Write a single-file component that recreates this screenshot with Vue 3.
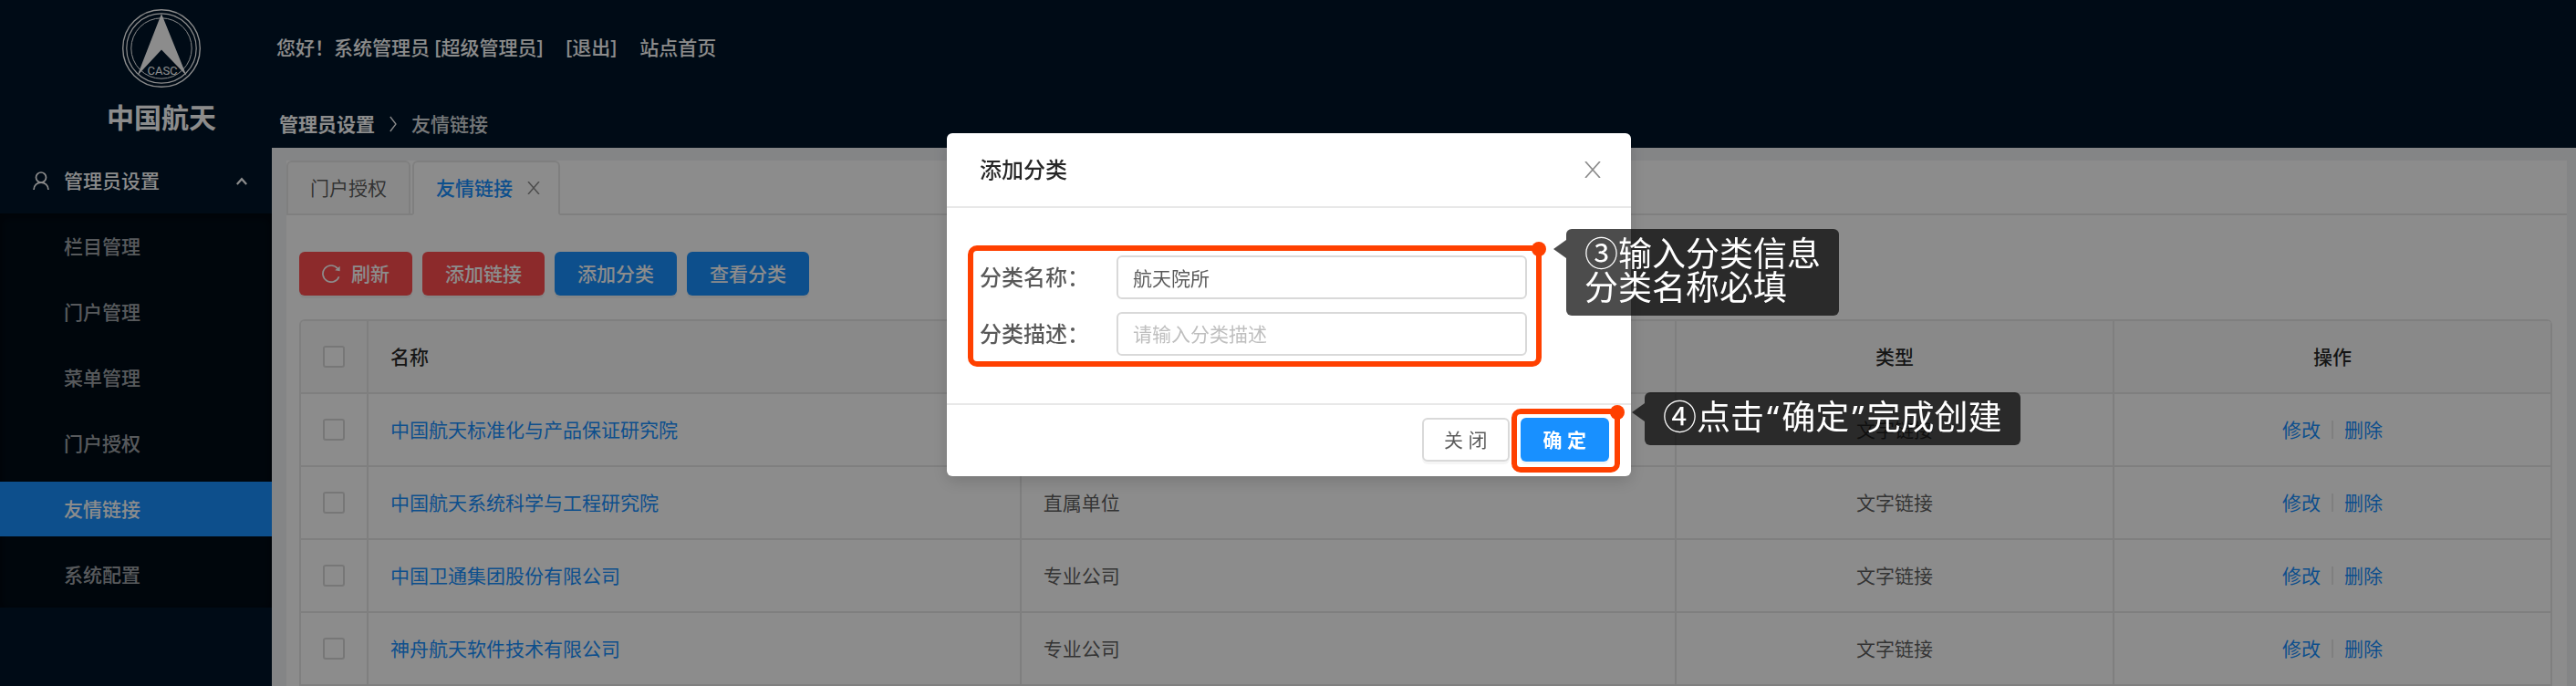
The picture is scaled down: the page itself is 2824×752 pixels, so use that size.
<script setup>
import { ref } from 'vue'

const menu = ['栏目管理', '门户管理', '菜单管理', '门户授权', '友情链接', '系统配置']
const activeMenu = ref('友情链接')
const rows = ref([
  { name: '中国航天标准化与产品保证研究院', category: '', type: '文字链接', checked: false },
  { name: '中国航天系统科学与工程研究院', category: '直属单位', type: '文字链接', checked: false },
  { name: '中国卫通集团股份有限公司', category: '专业公司', type: '文字链接', checked: false },
  { name: '神舟航天软件技术有限公司', category: '专业公司', type: '文字链接', checked: false }
])
const categoryName = ref('航天院所')
const categoryDesc = ref('')
</script>

<template>
  <div class="layout">
    <aside class="sidebar">
      <div class="brand">
        <svg class="logo" viewBox="0 0 86 86" aria-hidden="true">
          <g fill="none" stroke="#fff">
            <circle cx="43" cy="43" r="42.3" stroke-width="1.4" />
            <circle cx="43" cy="43" r="38.2" stroke-width="1.2" />
            <circle cx="43" cy="43" r="33.2" stroke-width="1" />
          </g>
          <path d="M43 5 L70.5 73 L43 44.5 L16.500 73 Z" fill="#fff" />
          <text class="logo-text" x="44" y="71.500" text-anchor="middle">CASC</text>
        </svg>
        <div class="brand-name">中国航天</div>
      </div>
      <button class="menu-title" type="button" aria-expanded="true">
        <svg class="user-icon" viewBox="0 0 18 20" fill="none" stroke="currentColor" stroke-width="1.700">
          <circle cx="9" cy="6.500" r="5.500" />
          <path d="M1 20 C1 9.500 17 9.500 17 20" />
        </svg>
        <span>管理员设置</span>
        <svg class="chevron" viewBox="0 0 12 9" fill="none" stroke="currentColor" stroke-width="2.200">
          <path d="M0.800 8 L6 2.200 L11.200 8" />
        </svg>
      </button>
      <nav class="submenu">
        <a
          v-for="item in menu"
          :key="item"
          href="#"
          :class="{ active: item === activeMenu }"
          @click.prevent="activeMenu = item"
        >{{ item }}</a>
      </nav>
    </aside>

    <div class="main">
      <header class="header">
        <div class="greeting">
          <span>您好！系统管理员 [超级管理员]</span>
          <a href="#">[退出]</a>
          <a href="#">站点首页</a>
        </div>
        <div class="breadcrumb">
          <strong>管理员设置</strong>
          <svg class="crumb-arrow" viewBox="0 0 8 18" fill="none" stroke="currentColor" stroke-width="1.300">
            <path d="M0.800 1 L7 9 L0.800 17" />
          </svg>
          <span>友情链接</span>
        </div>
      </header>

      <main class="content">
        <section class="panel">
          <div class="tabs">
            <button class="tab" type="button">门户授权</button>
            <button class="tab current" type="button">
              友情链接
              <svg class="tab-close" viewBox="0 0 14 14" stroke="currentColor" stroke-width="1.500">
                <path d="M1 0 L13 14 M13 0 L1 14" />
              </svg>
            </button>
          </div>

          <div class="body">
            <div class="toolbar">
              <button class="btn danger" type="button">
                <svg class="reload" viewBox="0 0 20 20" fill="none" stroke="currentColor" stroke-width="1.700">
                  <path d="M18.600 13.200 A9.100 9.100 0 1 1 17 4.200" />
                  <path d="M19.600 1.800 L19.600 7.200 L14.200 6.200 Z" fill="currentColor" stroke="none" />
                </svg>
                刷新
              </button>
              <button class="btn danger" type="button">添加链接</button>
              <button class="btn primary" type="button">添加分类</button>
              <button class="btn primary" type="button">查看分类</button>
            </div>

            <div class="table-box">
              <table>
                <colgroup>
                  <col class="c-check" />
                  <col class="c-name" />
                  <col class="c-cat" />
                  <col />
                  <col />
                </colgroup>
                <thead>
                  <tr>
                    <th class="center"><input type="checkbox" aria-label="全选" /></th>
                    <th>名称</th>
                    <th></th>
                    <th class="center">类型</th>
                    <th class="center">操作</th>
                  </tr>
                </thead>
                <tbody>
                  <tr v-for="row in rows" :key="row.name">
                    <td class="center"><input v-model="row.checked" type="checkbox" :aria-label="row.name" /></td>
                    <td><a href="#">{{ row.name }}</a></td>
                    <td>{{ row.category }}</td>
                    <td class="center">{{ row.type }}</td>
                    <td>
                      <div class="actions">
                        <a href="#">修改</a><i class="divider"></i><a href="#">删除</a>
                      </div>
                    </td>
                  </tr>
                </tbody>
              </table>
            </div>
          </div>
        </section>
      </main>
    </div>

    <div class="mask">
      <div class="modal" role="dialog" aria-labelledby="modal-title">
        <div class="modal-head">
          <h2 id="modal-title">添加分类</h2>
          <button class="modal-close" type="button" aria-label="关闭">
            <svg viewBox="0 0 18 18" stroke="currentColor" stroke-width="1.700">
              <path d="M1 0 L17 18 M17 0 L1 18" />
            </svg>
          </button>
        </div>
        <form class="modal-body" @submit.prevent>
          <div class="field">
            <label for="cat-name">分类名称：</label>
            <input id="cat-name" v-model="categoryName" type="text" />
          </div>
          <div class="field">
            <label for="cat-desc">分类描述：</label>
            <input id="cat-desc" v-model="categoryDesc" type="text" placeholder="请输入分类描述" />
          </div>
          <div class="mark mark-form">
            <i class="dot"></i>
            <div class="callout">③输入分类信息<br />分类名称必填</div>
          </div>
        </form>
        <div class="modal-foot">
          <button class="btn plain" type="button">关 闭</button>
          <div class="confirm">
            <button class="btn primary strong" type="button">确 定</button>
            <div class="mark mark-ok">
              <i class="dot"></i>
              <div class="callout">④点击<span class="quoted">“<b>确定</b>”</span>完成创建</div>
            </div>
          </div>
        </div>
      </div>
    </div>
  </div>
</template>

<style>
body {
  margin: 0;
  background: #f0f2f5;
}
</style>

<style scoped>
.layout,
.layout * {
  box-sizing: border-box;
}
.layout {
  display: flex;
  min-height: 100vh;
  font-family: "Noto Sans", "Noto Sans CJK SC", sans-serif;
  font-size: 21px;
  line-height: 32px;
  color: rgba(0, 0, 0, 0.65);
}
a {
  color: #1890ff;
  text-decoration: none;
}
button,
input {
  font: inherit;
  color: inherit;
}
button {
  border: 0;
  padding: 0;
  background: none;
  cursor: pointer;
}

.sidebar {
  flex: none;
  width: 298px;
  background: #001529;
  color: #fff;
}
.brand {
  display: flex;
  flex-direction: column;
  align-items: center;
  gap: 13px;
  padding: 10px 0 13px 56px;
}
.logo {
  display: block;
  width: 86px;
  height: 86px;
}
.logo-text {
  font: 13px Roboto, sans-serif;
  fill: #fff;
}
.brand-name {
  font-size: 30px;
  line-height: 40px;
  font-weight: 700;
}
.menu-title {
  display: flex;
  align-items: center;
  width: 100%;
  height: 72px;
  padding: 0 27px 0 36px;
  font-weight: 500;
}
.user-icon {
  width: 18px;
  height: 20px;
  margin-right: 16px;
}
.chevron {
  width: 12px;
  height: 9px;
  margin-left: auto;
}
.submenu {
  display: flex;
  flex-direction: column;
  gap: 12px;
  padding: 6px 0;
  background: #000c17;
  box-shadow: inset 0 3px 12px rgba(0, 0, 0, 0.45);
}
.submenu a {
  padding-left: 70px;
  line-height: 60px;
  font-weight: 500;
  color: rgba(255, 255, 255, 0.65);
}
.submenu a.active {
  background: #1890ff;
  color: #fff;
}

.main {
  flex: 1;
  min-width: 0;
  display: flex;
  flex-direction: column;
}
.header {
  display: flex;
  flex-direction: column;
  gap: 52px;
  padding: 36px 0 10px;
  background: #001529;
  color: #fff;
}
.greeting {
  display: flex;
  gap: 25px;
  padding-left: 5px;
  font-weight: 500;
}
.greeting a {
  color: #fff;
}
.breadcrumb {
  display: flex;
  align-items: center;
  gap: 16px;
  padding-left: 8px;
}
.breadcrumb strong {
  font-weight: 700;
}
.breadcrumb span {
  color: rgba(255, 255, 255, 0.85);
  font-weight: 500;
}
.crumb-arrow {
  width: 8px;
  height: 18px;
}
.content {
  flex: 1;
  display: flex;
  padding: 14px 10px 0 16px;
  background: #f0f2f5;
}
.panel {
  flex: 1;
  min-width: 0;
  background: #fff;
}
.tabs {
  display: flex;
  gap: 2px;
  height: 60px;
  border-bottom: 2px solid #e8e8e8;
}
.tab {
  display: flex;
  align-items: center;
  height: 60px;
  padding: 0 24px;
  border: 2px solid #e8e8e8;
  border-radius: 6px 6px 0 0;
  background: #fafafa;
}
.tab.current {
  padding-right: 20px;
  border-bottom-color: #fff;
  background: #fff;
  color: #1890ff;
  font-weight: 500;
}
.tab-close {
  width: 14px;
  height: 14px;
  margin-left: 16px;
  color: rgba(0, 0, 0, 0.45);
}
.body {
  padding: 40px 16px 0 14px;
}
.toolbar {
  display: flex;
  gap: 11px;
  margin-bottom: 26px;
}
.btn {
  display: flex;
  align-items: center;
  justify-content: center;
  height: 48px;
  padding: 0 25px;
  border-radius: 6px;
  color: #fff;
  font-weight: 500;
  box-shadow: 0 3px 0 rgba(0, 0, 0, 0.04);
}
.danger {
  background: #ff4d4f;
}
.primary {
  background: #1890ff;
}
.reload {
  width: 20px;
  height: 20px;
  margin-right: 12px;
}

.table-box {
  border: solid #e8e8e8;
  border-width: 2px 0 0 2px;
  border-radius: 6px 6px 0 0;
  overflow: hidden;
}
table {
  width: 100%;
  table-layout: fixed;
  border-collapse: separate;
  border-spacing: 0;
}
.c-check {
  width: 74px;
}
.c-name {
  width: 29%;
}
.c-cat {
  width: 29.1%;
}
th,
td {
  height: 80px;
  padding: 0 24px;
  border: solid #e8e8e8;
  border-width: 0 2px 2px 0;
  text-align: left;
}
th {
  background: #fafafa;
  color: rgba(0, 0, 0, 0.85);
  font-weight: 500;
}
.center {
  text-align: center;
}
input[type="checkbox"] {
  appearance: none;
  display: block;
  width: 24px;
  height: 24px;
  margin: 0;
  border: 2px solid #d9d9d9;
  border-radius: 3px;
  background: #fff;
}
.actions {
  display: flex;
  align-items: center;
  justify-content: center;
  gap: 12px;
}
.divider {
  width: 2px;
  height: 20px;
  background: #e8e8e8;
}

.mask {
  position: fixed;
  inset: 0;
  display: flex;
  justify-content: center;
  align-items: flex-start;
  padding: 146px 0 0 2px;
  background: rgba(0, 0, 0, 0.45);
}
.modal {
  width: 750px;
  border-radius: 6px;
  background: #fff;
  box-shadow: 0 6px 18px rgba(0, 0, 0, 0.15);
}
.modal-head {
  display: flex;
  align-items: center;
  justify-content: space-between;
  height: 82px;
  padding: 0 33px 0 36px;
  border-bottom: 2px solid #e8e8e8;
}
h2 {
  margin: 0;
  font-size: 24px;
  font-weight: 500;
  color: rgba(0, 0, 0, 0.85);
}
.modal-close {
  display: flex;
  color: rgba(0, 0, 0, 0.45);
}
.modal-close svg {
  width: 18px;
  height: 18px;
}
.modal-body {
  position: relative;
  display: flex;
  flex-direction: column;
  gap: 14px;
  padding: 52px 114px 52px 36px;
}
.field {
  display: flex;
  align-items: center;
}
.field label {
  flex: none;
  width: 150px;
  font-size: 24px;
  font-weight: 500;
}
.field input {
  flex: 1;
  min-width: 0;
  height: 48px;
  padding: 0 16px;
  border: 2px solid #d9d9d9;
  border-radius: 6px;
  background: #fff;
  outline: 0;
}
.field input::placeholder {
  color: #bfbfbf;
  opacity: 1;
}
.modal-foot {
  display: flex;
  justify-content: flex-end;
  gap: 12px;
  padding: 14px 24px 16px;
  border-top: 2px solid #e8e8e8;
}
.plain {
  border: 2px solid #d9d9d9;
  background: #fff;
  color: rgba(0, 0, 0, 0.65);
  font-weight: 400;
  padding: 0 22px;
}
.strong {
  font-weight: 700;
}
.confirm {
  position: relative;
}

.mark {
  position: absolute;
  border: 6px solid #ff4000;
  border-radius: 10px;
  pointer-events: none;
}
.mark-form {
  inset: 41px 98px 40px 23px;
}
.mark-ok {
  inset: -10px -12px -12px -10px;
}
.dot {
  position: absolute;
  top: -10px;
  right: -11px;
  width: 16px;
  height: 16px;
  border-radius: 50%;
  background: #ff4000;
}
.callout {
  position: absolute;
  top: -24px;
  left: calc(100% + 33px);
  padding: 8px 20px 13px;
  border-radius: 6px;
  background: rgba(0, 0, 0, 0.7);
  color: #fff;
  font-size: 37px;
  line-height: 37px;
  font-weight: 400;
  white-space: nowrap;
}
.quoted {
  padding: 0 3px;
}
.quoted b {
  padding: 0 3px;
  font-weight: 400;
}
.callout::before {
  content: "";
  position: absolute;
  top: 12px;
  right: 100%;
  border: solid transparent;
  border-width: 10px 14px 10px 0;
  border-right-color: rgba(0, 0, 0, 0.7);
}
</style>
